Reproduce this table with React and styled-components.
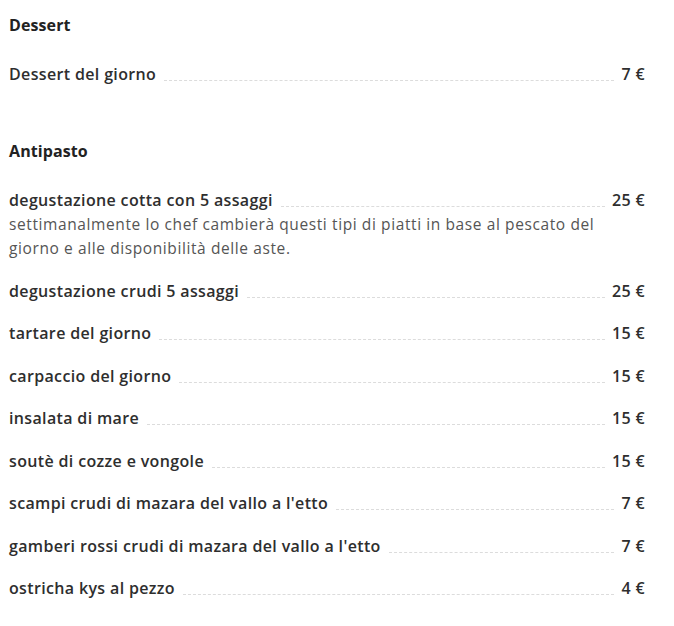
import React from "react";
import styled, { createGlobalStyle } from "styled-components";

const Global = createGlobalStyle`
  html, body { margin: 0; padding: 0; background: #fff; }
  body { font-family: "Open Sans", "Liberation Sans", sans-serif; color: #333; }
`;

const Page = styled.div`
  display: flex;
  flex-direction: column;
  gap: 53px;
  padding: 13px 29px 20px 9px;
`;

const Section = styled.section`
  display: flex;
  flex-direction: column;
`;

const Heading = styled.h2`
  margin: 0 0 25px;
  font-size: 16px;
  line-height: 24px;
  font-weight: 700;
  letter-spacing: 0.1px;
  color: #222;
`;

const Items = styled.div`
  display: flex;
  flex-direction: column;
  gap: 18.5px;
`;

const Item = styled.div``;

const Row = styled.div`
  display: flex;
  align-items: flex-end;
  height: 24px;
`;

const Name = styled.span`
  font-size: 16px;
  line-height: 24px;
  font-weight: 600;
  letter-spacing: 0.35px;
  color: #2e2e2e;
  white-space: nowrap;
`;

const Leader = styled.span`
  flex: 1;
  margin: 0 7px 5px 8px;
  border-bottom: 1px dashed #dcdcdc;
`;

const Price = styled(Name)``;

const Desc = styled.p`
  margin: 0;
  font-size: 15.5px;
  line-height: 24px;
  font-weight: 400;
  letter-spacing: 0.6px;
  color: #555;
`;

const sections = [
  {
    title: "Dessert",
    items: [{ name: "Dessert del giorno", price: "7 €" }],
  },
  {
    title: "Antipasto",
    items: [
      {
        name: "degustazione cotta con 5 assaggi",
        price: "25 €",
        desc: [
          "settimanalmente lo chef cambierà questi tipi di piatti in base al pescato del",
          "giorno e alle disponibilità delle aste.",
        ],
      },
      { name: "degustazione crudi 5 assaggi", price: "25 €" },
      { name: "tartare del giorno", price: "15 €" },
      { name: "carpaccio del giorno", price: "15 €" },
      { name: "insalata di mare", price: "15 €" },
      { name: "soutè di cozze e vongole", price: "15 €" },
      { name: "scampi crudi di mazara del vallo a l'etto", price: "7 €" },
      { name: "gamberi rossi crudi di mazara del vallo a l'etto", price: "7 €" },
      { name: "ostricha kys al pezzo", price: "4 €" },
    ],
  },
];

export default function App() {
  return (
    <>
      <Global />
      <Page>
        {sections.map((s) => (
          <Section key={s.title}>
            <Heading>{s.title}</Heading>
            <Items>
              {s.items.map((it) => (
                <Item key={it.name}>
                  <Row>
                    <Name>{it.name}</Name>
                    <Leader />
                    <Price>{it.price}</Price>
                  </Row>
                  {it.desc && (
                    <Desc>
                      {it.desc[0]}
                      <br />
                      {it.desc[1]}
                    </Desc>
                  )}
                </Item>
              ))}
            </Items>
          </Section>
        ))}
      </Page>
    </>
  );
}
